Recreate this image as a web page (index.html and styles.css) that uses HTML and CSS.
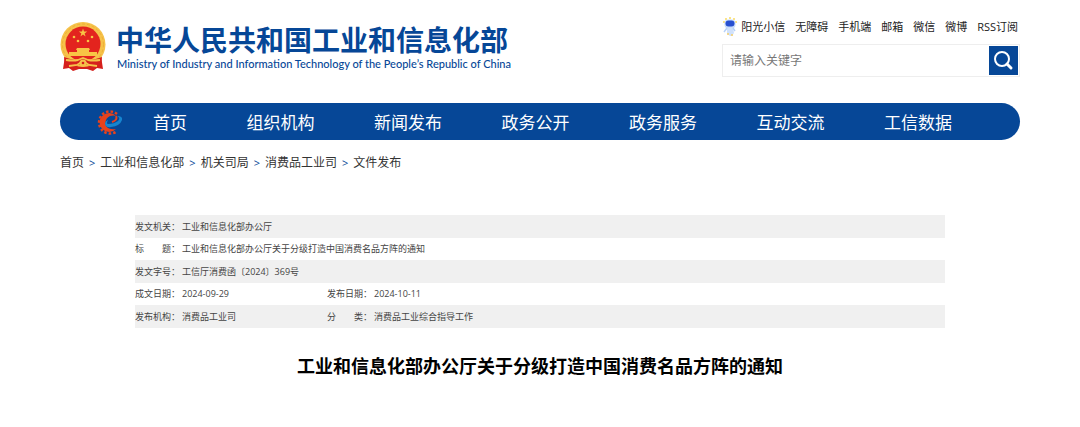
FILE: index.html
```html
<!DOCTYPE html>
<html lang="zh-CN">
<head>
  <meta charset="UTF-8">
  <title>工业和信息化部办公厅关于分级打造中国消费名品方阵的通知</title>
  <meta name="viewport" content="width=device-width, initial-scale=1.0">
  <link rel="stylesheet" href="styles.css">
</head>
<body>

<div class="container">
  <header class="header">
    <a class="brand" href="#">
      <svg class="emblem" viewBox="0 0 46 50" aria-hidden="true">
        <path d="M5 34 L3 47 L9 46 L13 49 L19 47 L27 47 L33 49 L37 46 L43 47 L41 34Z" fill="#d5201c"/>
        <circle cx="23" cy="22.500" r="22.500" fill="#f6c24a"/>
        <circle cx="23" cy="22.500" r="20.500" fill="none" stroke="#eeb035" stroke-width="1" stroke-dasharray="3 2"/>
        <circle cx="23" cy="22" r="17.500" fill="#e3241e"/>
        <path d="M23 6.500l1 3h3.200l-2.600 1.900 1 3.100-2.600-1.900-2.600 1.900 1-3.100-2.600-1.900H22z" fill="#f8c545"/>
        <g fill="#f8c545">
          <circle cx="14" cy="15" r="1.300"/>
          <circle cx="32" cy="15" r="1.300"/>
          <circle cx="18" cy="19" r="1.300"/>
          <circle cx="28" cy="19" r="1.300"/>
          <path d="M17 26h12l1 2h-1v2h8v4H9v-4h8v-2h-1z"/>
        </g>
        <path d="M4 35q8 3 13 3l6-2 6 2q5 0 13-3l-1 9q-7-2-11 0l-7-3-7 3q-4-2-11 0z" fill="#d5201c"/>
        <path d="M6 38q7 1 12 0l5-2 5 2q5 1 12 0M9 44l8-1 6-4 6 4 8 1" fill="none" stroke="#f6c24a" stroke-width="1.800"/>
        <circle cx="23" cy="41" r="3.500" fill="#f6c24a"/>
        <circle cx="23" cy="41" r="1.300" fill="#d5201c"/>
      </svg>
      <span class="brand-text">
        <span class="brand-cn">中华人民共和国工业和信息化部</span>
        <span class="brand-en">Ministry of Industry and Information Technology of the People’s Republic of China</span>
      </span>
    </a>

    <div class="tools">
      <div class="quick-links">
        <a class="mascot-link" href="#">
          <svg class="mascot" viewBox="0 0 14 20" aria-hidden="true">
            <g fill="#fadb62">
              <circle cx="3" cy="2" r="1"/>
              <circle cx="7" cy="1" r="1"/>
              <circle cx="11" cy="2" r="1"/>
              <circle cx="1" cy="5" r="1"/>
              <circle cx="13" cy="5" r="1"/>
            </g>
            <rect x="1.500" y="2.500" width="11" height="9" rx="4" fill="#c8dcfa"/>
            <rect x="2.500" y="3.500" width="9" height="6" rx="3" fill="#2850d0"/>
            <path d="M4 11h6l1 5-2 3H7l-3-2z" fill="#d0e1fb"/>
            <path d="M4 11l-3 4M10 11l2 3" stroke="#b8d2f8" stroke-width="1.500"/>
            <path d="M5 16v2M9 17v2" stroke="#f7cf6a" stroke-width="1.500"/>
          </svg>
          阳光小信
        </a>
        <a href="#">无障碍</a>
        <a href="#">手机端</a>
        <a href="#">邮箱</a>
        <a href="#">微信</a>
        <a href="#">微博</a>
        <a href="#">RSS订阅</a>
      </div>
      <form class="search">
        <input type="text" placeholder="请输入关键字" aria-label="请输入关键字">
        <button type="button" aria-label="搜索">
          <svg viewBox="0 0 29 29" aria-hidden="true">
            <circle cx="13" cy="13" r="7" fill="none" stroke="#fff" stroke-width="2"/>
            <path d="M18 18l4 4" stroke="#fff" stroke-width="3" stroke-linecap="round"/>
          </svg>
        </button>
      </form>
    </div>
  </header>

  <nav class="nav">
    <svg class="nav-logo" viewBox="0 0 26 26" aria-hidden="true">
      <!-- gear, open on the right -->
      <path d="M20 5A11 11 0 1 0 20 22" fill="none" stroke="#e8421c" stroke-width="2.500" stroke-dasharray="2.500 2"/>
      <path d="M19 7A9.500 9.500 0 1 0 19 20Q12 21 9 17Q7 10 13 7Q17 6 19 7Z" fill="#e8421c"/>
      <path d="M19 7Q21 11 15 13" fill="none" stroke="#e8421c" stroke-width="2"/>
      <!-- blue swoosh -->
      <path d="M8 15Q9 19 14 18Q23 17 25 11Q26 7 20 7Q24 9 21 12Q17 15 11 15Q9 15 11 11Q8 12 8 15Z" fill="#1685cf"/>
      <path d="M11 12Q12 8 16 8Q18 9 16 11Q14 12 11 12Z" fill="#064797"/>
    </svg>
    <ul class="nav-list">
      <li><a href="#">首页</a></li>
      <li><a href="#">组织机构</a></li>
      <li><a href="#">新闻发布</a></li>
      <li><a href="#">政务公开</a></li>
      <li><a href="#">政务服务</a></li>
      <li><a href="#">互动交流</a></li>
      <li><a href="#">工信数据</a></li>
    </ul>
  </nav>

  <div class="crumbs">
    <a href="#">首页</a>
    <span>&gt;</span>
    <a href="#">工业和信息化部</a>
    <span>&gt;</span>
    <a href="#">机关司局</a>
    <span>&gt;</span>
    <a href="#">消费品工业司</a>
    <span>&gt;</span>
    <a href="#">文件发布</a>
  </div>

  <main class="article">
    <table class="info">
      <colgroup>
        <col class="col-label">
        <col class="col-value">
        <col class="col-label">
        <col>
      </colgroup>
      <tr>
        <th scope="row">发文机关：</th>
        <td colspan="3">工业和信息化部办公厅</td>
      </tr>
      <tr>
        <th scope="row">标　　题：</th>
        <td colspan="3">工业和信息化部办公厅关于分级打造中国消费名品方阵的通知</td>
      </tr>
      <tr>
        <th scope="row">发文字号：</th>
        <td colspan="3">工信厅消费函〔2024〕369号</td>
      </tr>
      <tr>
        <th scope="row">成文日期：</th>
        <td>2024-09-29</td>
        <th scope="row">发布日期：</th>
        <td>2024-10-11</td>
      </tr>
      <tr>
        <th scope="row">发布机构：</th>
        <td>消费品工业司</td>
        <th scope="row">分　　类：</th>
        <td>消费品工业综合指导工作</td>
      </tr>
    </table>
    <h1>工业和信息化部办公厅关于分级打造中国消费名品方阵的通知</h1>
  </main>
</div>

</body>
</html>
```

FILE: styles.css
```css
* {
  box-sizing: border-box;
  margin: 0;
  padding: 0;
}

body {
  background: #fff;
  color: #333;
  font-family: "Open Sans", "Noto Sans CJK SC", sans-serif;
  font-size: 12px;
}

a {
  color: inherit;
  text-decoration: none;
}

.container {
  padding: 16px 60px 40px;
}

.header {
  display: flex;
  justify-content: space-between;
}

.brand {
  display: flex;
  align-items: flex-start;
  gap: 10px;
  padding-top: 6px;
  color: #064797;
}

.emblem {
  width: 46px;
  height: 50px;
}

.brand-text {
  display: flex;
  flex-direction: column;
}

.brand-cn {
  font-size: 28px;
  font-weight: 700;
  line-height: 36px;
}

.brand-en {
  padding-left: 1px;
  font-family: Lato, sans-serif;
  font-size: 11px;
  font-weight: 500;
  line-height: 12px;
}

.tools {
  width: 298px;
}

.quick-links {
  display: flex;
  justify-content: flex-end;
  gap: 10px;
  padding-right: 2px;
  color: #222;
  font-size: 11px;
  line-height: 22px;
}

.mascot-link {
  display: flex;
  align-items: center;
  gap: 4px;
}

.mascot {
  width: 14px;
  height: 20px;
}

.search {
  display: flex;
  margin-top: 6px;
  padding: 1px;
  border: 1px solid #eee;
}

.search input {
  flex: 1;
  min-width: 0;
  padding: 0 6px;
  border: none;
  outline: none;
  font-family: inherit;
  font-size: 12px;
}

.search input::placeholder {
  color: #777;
}

.search button {
  width: 29px;
  height: 29px;
  background: #064797;
  border: none;
  cursor: pointer;
}

.search svg {
  display: block;
}

.nav {
  display: flex;
  align-items: center;
  height: 37px;
  margin-top: 26px;
  padding: 0 68px 0 37px;
  background: #064797;
  border-radius: 19px;
}

.nav-logo {
  width: 26px;
  height: 26px;
}

.nav-list {
  flex: 1;
  display: flex;
  justify-content: space-between;
  margin-left: 30px;
  list-style: none;
  color: #fff;
  font-size: 17px;
}

.crumbs {
  display: flex;
  gap: 5px;
  margin-top: 13px;
  line-height: 20px;
}

.crumbs span {
  color: #064797;
  font-size: 11px;
}

.article {
  margin: 42px 75px 0;
}

.info {
  width: 100%;
  border-collapse: collapse;
  table-layout: fixed;
  color: #444;
  font-size: 9px;
  line-height: 22px;
}

.info tr:nth-child(odd) {
  height: 23px;
  background: #f0f0f0;
}

.info th {
  font-weight: 400;
  text-align: left;
  white-space: nowrap;
}

.col-label {
  width: 47px;
}

.col-value {
  width: 145px;
}

.article h1 {
  margin-top: 24px;
  color: #000;
  font-size: 18px;
  line-height: 28px;
  text-align: center;
}
```
